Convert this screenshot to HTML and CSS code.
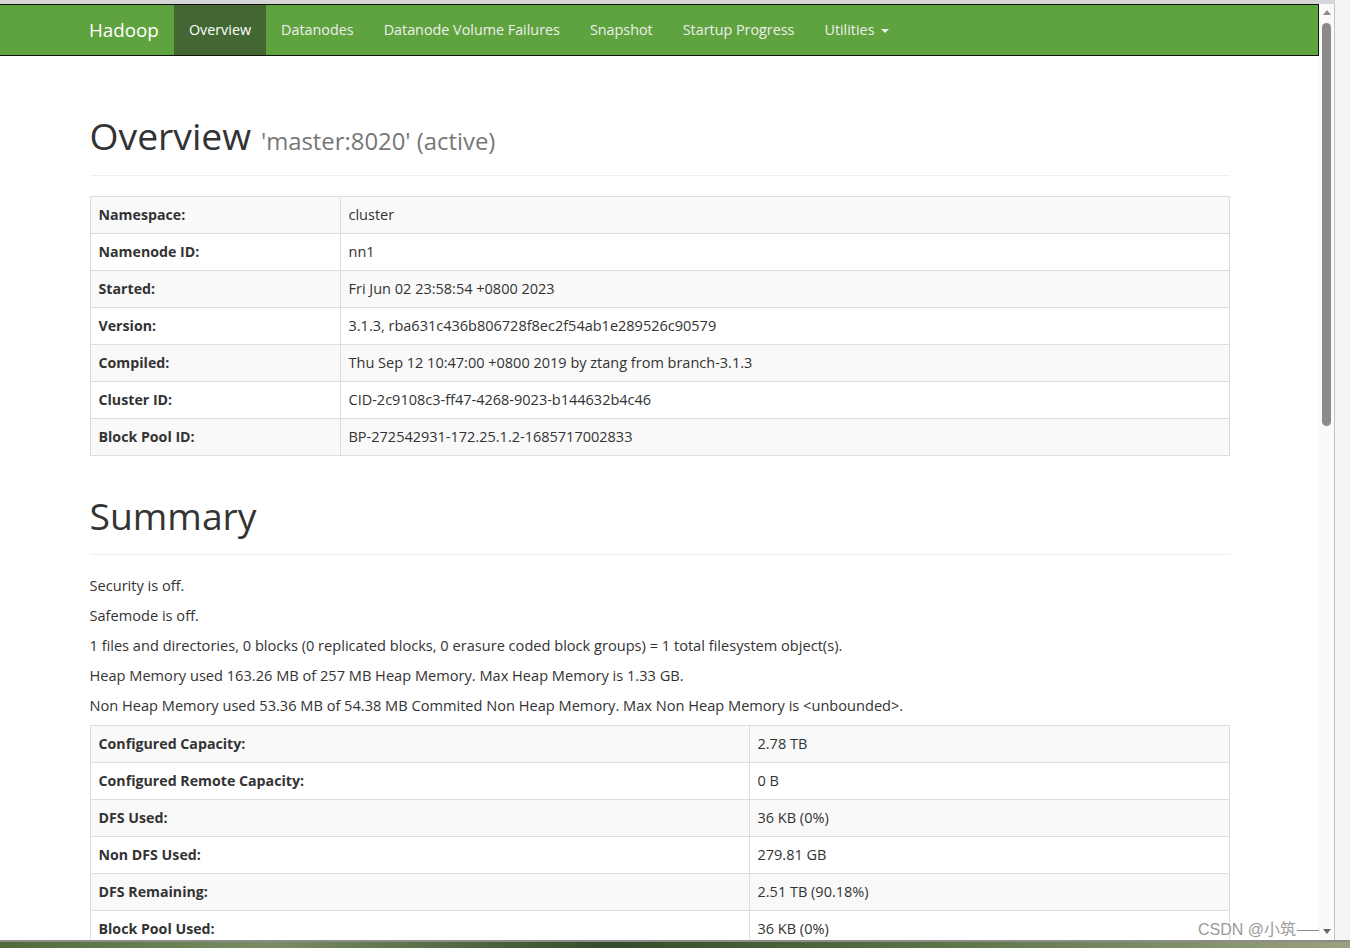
FILE: index.html
```html
<!DOCTYPE html>
<html>
<head>
<meta charset="utf-8">
<title>Namenode information</title>
<link rel="stylesheet" href="styles.css">
</head>
<body>
<div class="screen">
  <div class="topline"></div>
  <div class="frame">
    <div class="viewport">
      <nav class="navbar">
        <div class="nav-container">
          <a class="brand" href="#">Hadoop</a>
          <ul class="nav">
            <li class="active"><a href="#">Overview</a></li>
            <li><a href="#">Datanodes</a></li>
            <li><a href="#">Datanode Volume Failures</a></li>
            <li><a href="#">Snapshot</a></li>
            <li><a href="#">Startup Progress</a></li>
            <li><a href="#">Utilities <span class="caret"></span></a></li>
          </ul>
        </div>
      </nav>
      <div class="container">
        <div class="page-header"><h1>Overview <small>'master:8020' (active)</small></h1></div>
        <table class="info t1">
          <colgroup><col class="c1"><col></colgroup>
          <tr><th>Namespace:</th><td>cluster</td></tr>
          <tr><th>Namenode ID:</th><td>nn1</td></tr>
          <tr><th>Started:</th><td>Fri Jun 02 23:58:54 +0800 2023</td></tr>
          <tr><th>Version:</th><td>3.1.3, rba631c436b806728f8ec2f54ab1e289526c90579</td></tr>
          <tr><th>Compiled:</th><td>Thu Sep 12 10:47:00 +0800 2019 by ztang from branch-3.1.3</td></tr>
          <tr><th>Cluster ID:</th><td>CID-2c9108c3-ff47-4268-9023-b144632b4c46</td></tr>
          <tr><th>Block Pool ID:</th><td>BP-272542931-172.25.1.2-1685717002833</td></tr>
        </table>
        <div class="page-header"><h1>Summary</h1></div>
        <p>Security is off.</p>
        <p>Safemode is off.</p>
        <p>1 files and directories, 0 blocks (0 replicated blocks, 0 erasure coded block groups) = 1 total filesystem object(s).</p>
        <p>Heap Memory used 163.26 MB of 257 MB Heap Memory. Max Heap Memory is 1.33 GB.</p>
        <p>Non Heap Memory used 53.36 MB of 54.38 MB Commited Non Heap Memory. Max Non Heap Memory is &lt;unbounded&gt;.</p>
        <table class="info t2">
          <colgroup><col class="c2"><col></colgroup>
          <tr><th>Configured Capacity:</th><td>2.78 TB</td></tr>
          <tr><th>Configured Remote Capacity:</th><td>0 B</td></tr>
          <tr><th>DFS Used:</th><td>36 KB (0%)</td></tr>
          <tr><th>Non DFS Used:</th><td>279.81 GB</td></tr>
          <tr><th>DFS Remaining:</th><td>2.51 TB (90.18%)</td></tr>
          <tr><th>Block Pool Used:</th><td>36 KB (0%)</td></tr>
        </table>
      </div>
    </div>
    <div class="scrollbar">
      <div class="arrow up"></div>
      <div class="thumb"></div>
      <div class="track"></div>
      <div class="arrow down"></div>
    </div>
    <div class="outside"></div>
  </div>
  <div class="bottom-strip"></div>
  <div class="watermark">CSDN @小筑<span class="wm-line"></span></div>
</div>
</body>
</html>
```
FILE: styles.css
```css
* { box-sizing: border-box; }
html, body { margin: 0; padding: 0; }
body {
  font-family: "Open Sans", "Noto Sans CJK SC", sans-serif;
  font-size: 14.6px;
  line-height: 20px;
  color: #333;
  background: #f4f4f4;
}
.screen { position: relative; width: 1350px; height: 948px; overflow: hidden; }
.topline { height: 4px; width: 1335px; background: #d6d6d6; }
.frame { display: flex; height: 936px; }
.viewport { width: 1319px; height: 936px; overflow: hidden; background: #fff; }
.navbar {
  height: 52px;
  background: #5fa33e;
  border: 1px solid #111;
  border-left: 0;
}
.nav-container { width: 1170px; margin: 0 auto; padding: 0 15px; display: flex; }
.brand {
  margin-left: -15px;
  padding: 15px;
  height: 50px;
  font-size: 18.8px;
  line-height: 20px;
  color: #fff;
  text-decoration: none;
}
.nav { list-style: none; margin: 0; padding: 0; display: flex; font-size: 14.35px; }
.nav a {
  display: block;
  padding: 15px;
  line-height: 20px;
  color: #eee;
  text-decoration: none;
}
.nav .active a { background: #436733; color: #fff; }
.caret {
  display: inline-block;
  width: 0; height: 0;
  margin-left: 3px;
  vertical-align: middle;
  border-top: 4px solid #eee;
  border-left: 4px solid transparent;
  border-right: 4px solid transparent;
}
.container { width: 1170px; margin: 0 auto; padding: 20px 15px 0; }
.page-header {
  margin: 40px 0 20px;
  padding-bottom: 9px;
  border-bottom: 1px solid #eee;
}
h1 {
  margin: 0 0 10px;
  font-size: 37.3px;
  line-height: 39.6px;
  font-weight: 400;
  color: #333;
}
h1 small { font-size: 64%; line-height: 1; color: #777; font-weight: 400; }
p { margin: 0 0 10px; }
.info {
  width: 100%;
  border-collapse: collapse;
  border: 1px solid #ddd;
  margin-bottom: 20px;
  table-layout: fixed;
}
.info th, .info td {
  padding: 8px;
  line-height: 20px;
  border: 1px solid #ddd;
  text-align: left;
  vertical-align: top;
}
.info td { font-size: 14.5px; }
.info th { font-weight: 700; font-size: 14.2px; }
.info tr:nth-child(odd) { background: #f9f9f9; }
.c1 { width: 250px; }
.c2 { width: 659px; }
.scrollbar {
  width: 16px;
  background: #fafafa;
  border-right: 1px solid #c3c3c3;
  display: flex;
  flex-direction: column;
  align-items: center;
}
.arrow { width: 0; height: 0; border-left: 4px solid transparent; border-right: 4px solid transparent; }
.arrow.up { margin-top: 6px; border-bottom: 5px solid #8a8a8a; }
.arrow.down { margin-bottom: 6px; border-top: 5px solid #666; }
.thumb { margin-top: 8px; width: 9px; height: 403px; background: #8b8b8b; border-radius: 5px; }
.track { flex: 1; }
.outside { flex: 1; background: #f5f5f5; }
.bottom-strip {
  height: 8px;
  border-top: 2px solid #8c8c8c;
  background: linear-gradient(90deg, #4d6b3a 0%, #7a8d62 20%, #344b2a 45%, #5c7446 70%, #9aa27f 100%);
}
.watermark {
  position: absolute;
  left: 1198px;
  top: 920px;
  font-size: 16px;
  line-height: 20px;
  color: #9a9a9a;
  font-family: "Liberation Sans", "Noto Sans CJK SC", sans-serif;
  display: flex;
  align-items: center;
}
.wm-line { display: inline-block; width: 22px; height: 1px; background: #8a8a8a; margin-left: 1px; }
```
